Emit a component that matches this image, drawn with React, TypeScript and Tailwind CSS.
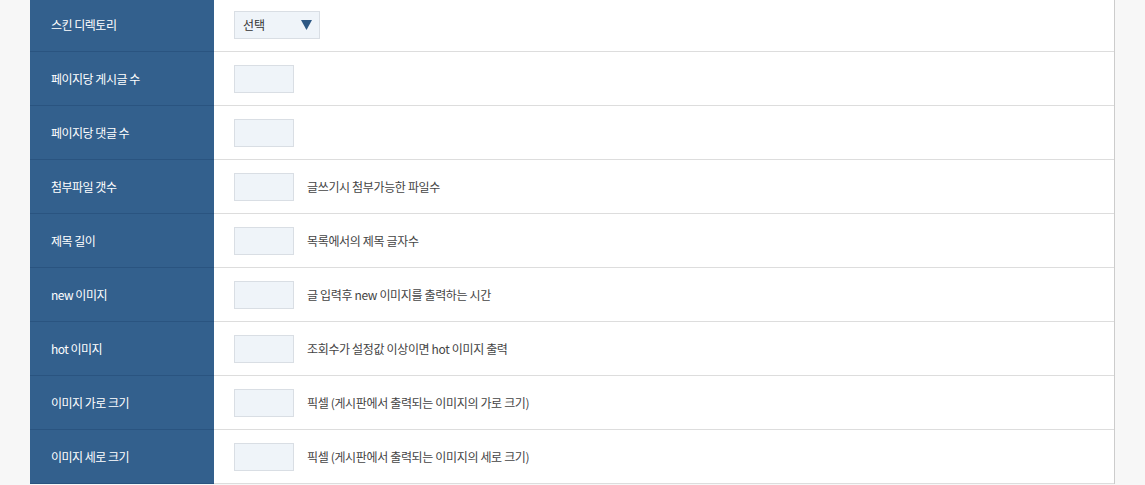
const rows: { label: string; kind: "select" | "input"; note?: string }[] = [
  { label: "스킨 디렉토리", kind: "select" },
  { label: "페이지당 게시글 수", kind: "input" },
  { label: "페이지당 댓글 수", kind: "input" },
  { label: "첨부파일 갯수", kind: "input", note: "글쓰기시 첨부가능한 파일수" },
  { label: "제목 길이", kind: "input", note: "목록에서의 제목 글자수" },
  { label: "new 이미지", kind: "input", note: "글 입력후 new 이미지를 출력하는 시간" },
  { label: "hot 이미지", kind: "input", note: "조회수가 설정값 이상이면 hot 이미지 출력" },
  { label: "이미지 가로 크기", kind: "input", note: "픽셀 (게시판에서 출력되는 이미지의 가로 크기)" },
  { label: "이미지 세로 크기", kind: "input", note: "픽셀 (게시판에서 출력되는 이미지의 세로 크기)" },
];

export default function App() {
  return (
    <div
      className="h-[485px] overflow-hidden bg-[#f7f7f7] pl-[30px] pr-[30px]"
      style={{ fontFamily: '"Noto Sans CJK KR", "Noto Sans", sans-serif' }}
    >
      {/* Settings table */}
      <div className="-mt-[2px] border-r border-[#cccccc] bg-white">
        {rows.map((row) => (
          <div key={row.label} className="flex h-[54px]">
            <div className="flex w-[184px] shrink-0 items-center border-b border-[#2a5480] bg-[#33608d] pl-[21px] text-[12px] tracking-[-0.5px] text-white">
              {row.label}
            </div>
            <div className="flex flex-1 items-center border-b border-[#dddddd] pl-[20px]">
              {row.kind === "select" ? (
                <div className="flex h-[28px] w-[86px] items-center justify-between border border-[#d9dee4] bg-[#eff4f9] pl-[8px] pr-[7px] text-[12px] text-[#333]">
                  <span>선택</span>
                  <svg width="11" height="10" viewBox="0 0 11 10">
                    <path d="M0 0h11L5.5 10z" fill="#2d5884" />
                  </svg>
                </div>
              ) : (
                <div className="h-[28px] w-[60px] border border-[#d9dee4] bg-[#eff4f9]" />
              )}
              {row.note && (
                <span className="ml-[13px] text-[12px] tracking-[-0.35px] text-[#444]">{row.note}</span>
              )}
            </div>
          </div>
        ))}
      </div>
    </div>
  );
}
